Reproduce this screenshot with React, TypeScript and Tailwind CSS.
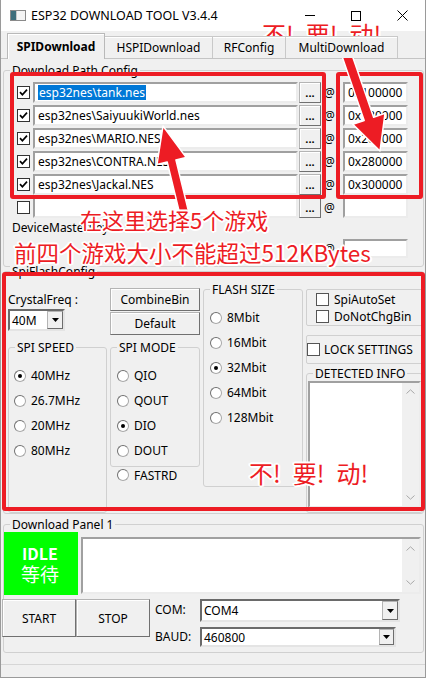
import React from "react";

const FONT = "font-['Noto_Sans','Noto_Sans_CJK_SC',sans-serif]";
const CJK = "font-['Noto_Sans_CJK_SC','Noto_Sans',sans-serif]";
const HALO =
  "[text-shadow:-2px_0_0_#fff,2px_0_0_#fff,0_-2px_0_#fff,0_2px_0_#fff,-1px_-1px_0_#fff,1px_1px_0_#fff,-1px_1px_0_#fff,1px_-1px_0_#fff,-2px_-1px_0_#fff,2px_1px_0_#fff]";

function Check({ checked = false, className = "" }: { checked?: boolean; className?: string }) {
  return (
    <div className={`w-[13px] h-[13px] shrink-0 bg-white border border-[#333333] flex items-center justify-center ${className}`}>
      {checked && (
        <svg width="9" height="9" viewBox="0 0 9 9">
          <path d="M1 4.2 L3.4 6.8 L8 1.6" fill="none" stroke="#000" strokeWidth="1.7" />
        </svg>
      )}
    </div>
  );
}

function Radio({ checked = false }: { checked?: boolean }) {
  return (
    <div className="w-[12px] h-[12px] shrink-0 rounded-full bg-white border border-[#a8a8a8] border-t-[#707070] border-l-[#707070] flex items-center justify-center">
      {checked && <div className="w-[4px] h-[4px] rounded-full bg-black" />}
    </div>
  );
}

function RadioRow({ label, checked = false, className = "" }: { label: string; checked?: boolean; className?: string }) {
  return (
    <div className={`flex items-center h-[25px] ${className}`}>
      <Radio checked={checked} />
      <span className="ml-[5px] leading-[15px] whitespace-nowrap">{label}</span>
    </div>
  );
}

function Field({ className = "", children }: { className?: string; children?: React.ReactNode }) {
  return (
    <div
      className={`bg-white border-2 border-t-[#a0a0a0] border-l-[#a0a0a0] border-r-[#ececec] border-b-[#ececec] flex items-center pl-[3px] whitespace-nowrap overflow-hidden leading-[15px] ${className}`}
    >
      {children}
    </div>
  );
}

function Btn({ className = "", children }: { className?: string; children?: React.ReactNode }) {
  return (
    <div
      className={`bg-[#f0f0f0] border border-[#b4b4b4] border-r-[#707070] border-b-[#707070] shadow-[inset_1px_1px_0_#ffffff] flex items-center justify-center whitespace-nowrap ${className}`}
    >
      {children}
    </div>
  );
}

function DropArrow() {
  return (
    <svg width="7" height="4" viewBox="0 0 7 4">
      <path d="M0 0H7L3.5 4Z" fill="#000" />
    </svg>
  );
}

function Select({ value, className = "", btn = "" }: { value: string; className?: string; btn?: string }) {
  return (
    <div
      className={`bg-white border-2 border-t-[#6a6a6a] border-l-[#6a6a6a] border-r-[#e4e4e4] border-b-[#e4e4e4] flex items-center ${className}`}
    >
      <span className="pl-[2px] flex-1 leading-[15px]">{value}</span>
      <div
        className={`bg-[#f0f0f0] border border-[#b4b4b4] border-r-[#6d6d6d] border-b-[#6d6d6d] flex items-center justify-center ${btn}`}
      >
        <DropArrow />
      </div>
    </div>
  );
}

function Group({ label, className = "", children }: { label: string; className?: string; children?: React.ReactNode }) {
  return (
    <div className={`border border-[#d0d0d0] rounded-[3px] ${className}`}>
      <div className="-mt-[8px] ml-[6px] px-[2px] w-fit bg-[#f0f0f0] h-[15px] leading-[15px] whitespace-nowrap">{label}</div>
      {children}
    </div>
  );
}

function VScroll({ className = "" }: { className?: string }) {
  return (
    <div className={`w-[17px] h-full bg-[#f0f0f0] flex flex-col justify-between items-center ${className}`}>
      <svg width="9" height="5" viewBox="0 0 9 5">
        <path d="M0.5 4.5L4.5 0.8L8.5 4.5" stroke="#a8a8a8" fill="none" />
      </svg>
      <svg width="9" height="5" viewBox="0 0 9 5">
        <path d="M0.5 0.5L4.5 4.2L8.5 0.5" stroke="#a8a8a8" fill="none" />
      </svg>
    </div>
  );
}

function arrow(x1: number, y1: number, x2: number, y2: number, sw: number, hl: number, hw: number) {
  const dx = x2 - x1;
  const dy = y2 - y1;
  const len = Math.hypot(dx, dy);
  const ux = dx / len;
  const uy = dy / len;
  const px = -uy;
  const py = ux;
  const bx = x2 - ux * hl;
  const by = y2 - uy * hl;
  const pts = [
    [x1 + px * sw, y1 + py * sw],
    [bx + px * sw, by + py * sw],
    [bx + px * hw, by + py * hw],
    [x2, y2],
    [bx - px * hw, by - py * hw],
    [bx - px * sw, by - py * sw],
    [x1 - px * sw, y1 - py * sw],
  ];
  return pts.map((p) => `${p[0].toFixed(1)},${p[1].toFixed(1)}`).join(" ");
}

const rows = [
  { checked: true, path: "esp32nes\\tank.nes", addr: "0x100000", sel: true },
  { checked: true, path: "esp32nes\\SaiyuukiWorld.nes", addr: "0x180000" },
  { checked: true, path: "esp32nes\\MARIO.NES", addr: "0x200000" },
  { checked: true, path: "esp32nes\\CONTRA.NES", addr: "0x280000" },
  { checked: true, path: "esp32nes\\Jackal.NES", addr: "0x300000" },
  { checked: false, path: "", addr: "" },
];

export default function App() {
  return (
    <div
      className={`w-[426px] h-[678px] relative overflow-hidden bg-[#f0f0f0] border-x border-b border-[#9a9a9a] text-[12px] text-black flex flex-col ${FONT}`}
    >
      {/* Title bar */}
      <div className="h-[31px] shrink-0 bg-white flex items-center">
        <div className="ml-[9px] w-[16px] h-[11px] border border-[#8a8a8a] flex bg-[#e9e9e9]">
          <div className="w-[5px] h-full bg-[#3f6f7c]" />
          <div className="flex-1 h-full bg-[#f4f4f4] border-l border-[#c8c8c8]" />
        </div>
        <span className="ml-[5px] text-[12.5px] leading-[16px] whitespace-nowrap">ESP32 DOWNLOAD TOOL V3.4.4</span>
        <div className="ml-auto flex h-full">
          <div className="w-[46px] h-full flex items-center justify-center">
            <div className="w-[10px] h-[1px] bg-black" />
          </div>
          <div className="w-[46px] h-full flex items-center justify-center">
            <div className="w-[10px] h-[10px] border border-black" />
          </div>
          <div className="w-[46px] h-full flex items-center justify-center">
            <svg width="11" height="11" viewBox="0 0 11 11">
              <path d="M0.5 0.5L10.5 10.5M10.5 0.5L0.5 10.5" stroke="#000" strokeWidth="1" />
            </svg>
          </div>
        </div>
      </div>

      {/* Tabs */}
      <div className="h-[27px] shrink-0 flex items-end pl-[6px] relative z-10">
        <div className="w-[98px] h-[26px] -mb-[1px] bg-[#f0f0f0] border border-b-0 border-[#b9b9b9] shadow-[inset_1px_1px_0_#ffffff] flex items-center justify-center font-bold leading-[15px]">
          SPIDownload
        </div>
        <div className="w-[108px] h-[22px] bg-[#f0f0f0] border border-b-0 border-l-0 border-[#c9c9c9] shadow-[inset_0_1px_0_#ffffff] flex items-center justify-center leading-[15px]">
          HSPIDownload
        </div>
        <div className="w-[73px] h-[22px] bg-[#f0f0f0] border border-b-0 border-l-0 border-[#c9c9c9] shadow-[inset_0_1px_0_#ffffff] flex items-center justify-center leading-[15px]">
          RFConfig
        </div>
        <div className="w-[112px] h-[22px] bg-[#f0f0f0] border border-b-0 border-l-0 border-[#c9c9c9] shadow-[inset_0_1px_0_#ffffff] flex items-center justify-center leading-[15px]">
          MultiDownload
        </div>
      </div>

      {/* Panel */}
      <div className="flex-1 border-t border-[#c4c4c4] flex flex-col">
        {/* Download Path Config */}
        <Group label="Download Path Config" className="mt-[11px] ml-[2px] w-[421px] h-[197px] shrink-0">
          <div className="mt-[4px] pl-[13px] flex flex-col gap-[2px]">
            {rows.map((r, i) => (
              <div key={i} className="flex items-center h-[21px]">
                <Check checked={r.checked} />
                <Field className={`ml-[3px] w-[265px] h-[21px] ${r.sel ? "bg-[#00ff00]" : ""}`}>
                  {r.sel ? <span className="bg-[#0078d7] text-white px-[1px]">{r.path}</span> : r.path}
                </Field>
                <Btn className="ml-[1px] w-[22px] h-[21px] leading-[15px] font-bold text-[11px]">...</Btn>
                <span className="ml-[3px] w-[10px] leading-[15px]">@</span>
                <Field className="ml-[9px] w-[65px] h-[21px]">{r.addr}</Field>
              </div>
            ))}
          </div>
          <div className="mt-[2px] pl-[8px] h-[15px] leading-[15px] whitespace-nowrap">DeviceMasterKey :</div>
          <div className="flex items-center h-[19px] mt-[4px] ml-[320px]">
            <span className="w-[10px] leading-[15px]">@</span>
            <Field className="ml-[9px] w-[65px] h-[19px]" />
          </div>
        </Group>

        {/* SpiFlashConfig */}
        <Group label="SpiFlashConfig" className="mt-[4px] ml-[2px] w-[421px] h-[243px] shrink-0">
          <div className="flex pl-[4px] gap-[3px]">
            {/* Col A */}
            <div className="w-[99px] flex flex-col">
              <div className="mt-[13px] h-[15px] leading-[15px] whitespace-nowrap">CrystalFreq :</div>
              <Select value="40M" className="mt-[2px] w-[57px] h-[22px]" btn="w-[16px] h-full" />
              <Group label="SPI SPEED" className="mt-[16px] w-[99px] h-[166px]">
                <div className="mt-[8px] pl-[5px]">
                  <RadioRow label="40MHz" checked />
                  <RadioRow label="26.7MHz" />
                  <RadioRow label="20MHz" />
                  <RadioRow label="80MHz" />
                </div>
              </Group>
            </div>
            {/* Col B */}
            <div className="w-[90px] flex flex-col">
              <Btn className="mt-[9px] h-[23px] leading-[15px]">CombineBin</Btn>
              <Btn className="mt-[1px] h-[23px] leading-[15px]">Default</Btn>
              <Group label="SPI MODE" className="mt-[12px] w-[90px] h-[120px]">
                <div className="mt-[8px] pl-[6px]">
                  <RadioRow label="QIO" />
                  <RadioRow label="QOUT" />
                  <RadioRow label="DIO" checked />
                  <RadioRow label="DOUT" />
                </div>
              </Group>
              <RadioRow label="FASTRD" className="!h-[16px] pl-[7px]" />
            </div>
            {/* Col C */}
            <div className="w-[100px] flex flex-col">
              <Group label="FLASH SIZE" className="mt-[10px] w-[100px] h-[198px]">
                <div className="mt-[8px] pl-[6px]">
                  <RadioRow label="8Mbit" />
                  <RadioRow label="16Mbit" />
                  <RadioRow label="32Mbit" checked />
                  <RadioRow label="64Mbit" />
                  <RadioRow label="128Mbit" />
                </div>
              </Group>
            </div>
            {/* Col D */}
            <div className="w-[117px] flex flex-col">
              <div className="mt-[10px] h-[37px] border border-[#d0d0d0] rounded-[2px] pt-[1px] pl-[9px]">
                <div className="flex items-center h-[17px]">
                  <Check className="!border-[#555555]" />
                  <span className="ml-[5px] leading-[15px] whitespace-nowrap">SpiAutoSet</span>
                </div>
                <div className="flex items-center h-[17px]">
                  <Check className="!border-[#555555]" />
                  <span className="ml-[5px] leading-[15px] whitespace-nowrap">DoNotChgBin</span>
                </div>
              </div>
              <div className="mt-[9px] h-[29px] border border-[#d0d0d0] rounded-[2px] flex items-center">
                <Check className="!border-[#555555]" />
                <span className="ml-[4px] leading-[15px] whitespace-nowrap">LOCK SETTINGS</span>
              </div>
              <Group label="DETECTED INFO" className="mt-[9px] w-[117px] h-[140px]">
                <div className="ml-[1px] w-[113px] h-[127px] bg-white border-2 border-t-[#a0a0a0] border-l-[#a0a0a0] border-r-[#ececec] border-b-[#ececec] flex justify-end">
                  <VScroll className="py-[6px]" />
                </div>
              </Group>
            </div>
          </div>
        </Group>

        {/* Download Panel 1 */}
        <Group label="Download Panel 1" className="mt-[10px] ml-[2px] w-[421px] h-[129px] shrink-0">
          <div className="flex">
            <div className={`w-[74px] h-[63px] bg-[#00ff00] text-white flex flex-col items-center pt-[11px] pr-[2px] ${CJK}`}>
              <div className="h-[20px] leading-[20px] text-[16px] font-bold">IDLE</div>
              <div className="h-[22px] leading-[22px] text-[19px]">等待</div>
            </div>
            <div className="ml-[3px] mt-[5px] w-[340px] h-[57px] bg-white border-2 border-t-[#a0a0a0] border-l-[#a0a0a0] border-r-[#ececec] border-b-[#ececec] flex justify-end">
              <VScroll className="py-[7px]" />
            </div>
          </div>
          <div className="flex mt-[4px]">
            <Btn className="-ml-[2px] w-[74px] h-[38px] leading-[15px]">START</Btn>
            <Btn className="w-[74px] h-[38px] leading-[15px]">STOP</Btn>
            <div className="ml-[5px] flex flex-col">
              <div className="flex items-center h-[23px]">
                <span className="w-[45px] leading-[15px] -mt-[2px]">COM:</span>
                <Select value="COM4" className="w-[200px] h-[23px]" btn="w-[16px] h-[19px]" />
              </div>
              <div className="flex items-center h-[20px] mt-[5px]">
                <span className="w-[45px] leading-[15px] -mt-[2px]">BAUD:</span>
                <Select value="460800" className="w-[196px] h-[20px]" btn="w-[15px] h-[16px]" />
              </div>
            </div>
          </div>
        </Group>

        {/* Status bar */}
        <div className="mt-[11px] flex-1 border-t border-[#d6d6d6]" />
      </div>

      {/* ===== Annotations overlay ===== */}
      <div className="absolute left-[9px] top-[72px] w-[316px] h-[127px] border-[4px] border-[#ed1c24] rounded-[3px] pointer-events-none" />
      <div className="absolute left-[335px] top-[72px] w-[87px] h-[127px] border-[4px] border-[#ed1c24] rounded-[3px] pointer-events-none" />
      <div className="absolute left-[1px] top-[272px] w-[423px] h-[239px] border-[4px] border-[#ed1c24] rounded-[3px] pointer-events-none" />

      <svg className="absolute -left-[1px] top-0 pointer-events-none" width="426" height="678" viewBox="0 0 426 678">
        <polygon points={arrow(184, 212, 163, 126, 4.5, 36, 15)} fill="#ed1c24" stroke="#ffffff" strokeWidth="1.5" strokeLinejoin="round" />
        <polygon points={arrow(343, 44, 380, 151, 5, 34, 17)} fill="#ed1c24" stroke="#ffffff" strokeWidth="1.5" strokeLinejoin="round" />
      </svg>

      <div className={`absolute left-[261px] top-[21px] flex gap-[12px] text-[24px] leading-[26px] text-[#ed1c24] whitespace-nowrap ${CJK} ${HALO}`}>
        <span>不!</span>
        <span>要!</span>
        <span>动!</span>
      </div>
      <div className={`absolute left-[79px] top-[207px] text-[22px] leading-[24px] text-[#ed1c24] whitespace-nowrap ${CJK} ${HALO}`}>
        在这里选择5个游戏
      </div>
      <div className={`absolute left-[13px] top-[240px] text-[22.5px] leading-[24px] text-[#ed1c24] whitespace-nowrap ${CJK} ${HALO}`}>
        前四个游戏大小不能超过512KBytes
      </div>
      <div className={`absolute left-[248px] top-[460px] flex gap-[12px] text-[24px] leading-[26px] text-[#ed1c24] whitespace-nowrap ${CJK} ${HALO}`}>
        <span>不!</span>
        <span>要!</span>
        <span>动!</span>
      </div>
    </div>
  );
}
